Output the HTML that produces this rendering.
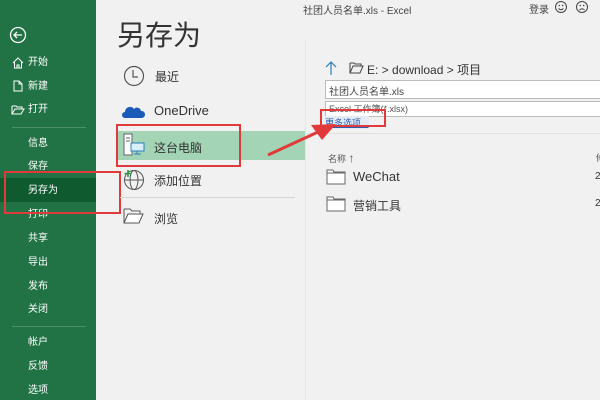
<!DOCTYPE html>
<html><head><meta charset="utf-8"><style>
*{margin:0;padding:0;box-sizing:border-box}
body{width:600px;height:400px;overflow:hidden;background:#f1f1f1;font-family:"Liberation Sans","Noto Sans CJK SC",sans-serif;position:relative;color:#333}
.a{position:absolute;white-space:nowrap}
#side{position:absolute;left:0;top:0;width:96px;height:400px;background:#217346}
.s{position:absolute;left:28px;font-size:10px;color:#fff;line-height:12px}
.hl{position:absolute;left:0;top:178px;width:96px;height:24px;background:#0f5a2e}
.ln{position:absolute;left:12px;width:74px;height:1px;background:#4d9068}
.box{position:absolute;border:1px solid #bbb;background:#fff}
.red{position:absolute;border:2px solid #e03a3a}
</style></head><body>
<div id="side">
<svg class="a" style="left:9px;top:26px" width="18" height="18"><circle cx="9" cy="9" r="7.5" fill="none" stroke="#fff" stroke-width="1.3"/><path d="M13 9H5M8 6L5 9l3 3" fill="none" stroke="#fff" stroke-width="1.3"/></svg>
<svg class="a" style="left:12px;top:57px" width="12" height="12"><path d="M1 6L6 1l5 5M2.5 5v6h7V5M5 11V8h2v3" fill="none" stroke="#fff" stroke-width="1"/></svg>
<div class="s" style="top:57px">开始</div>
<svg class="a" style="left:12px;top:80px" width="12" height="12"><path d="M2 1h5l3 3v7H2zM7 1v3h3" fill="none" stroke="#fff" stroke-width="1"/></svg>
<div class="s" style="top:81px">新建</div>
<svg class="a" style="left:11px;top:104px" width="14" height="12"><path d="M1 2h4l1 1h5v2M1 2v8h9l3-5H4L1 10" fill="none" stroke="#fff" stroke-width="1"/></svg>
<div class="s" style="top:104px">打开</div>
<div class="ln" style="top:127px"></div>
<div class="s" style="top:138px">信息</div>
<div class="s" style="top:161px">保存</div>
<div class="hl"></div>
<div class="s" style="top:185px">另存为</div>
<div class="s" style="top:209px">打印</div>
<div class="s" style="top:233px">共享</div>
<div class="s" style="top:257px">导出</div>
<div class="s" style="top:281px">发布</div>
<div class="s" style="top:304px">关闭</div>
<div class="ln" style="top:326px"></div>
<div class="s" style="top:337px">帐户</div>
<div class="s" style="top:361px">反馈</div>
<div class="s" style="top:385px">选项</div>
</div>
<div class="red" style="left:4px;top:171px;width:117px;height:43px"></div>

<div class="a" style="left:303px;top:2px;font-size:10px;color:#444">社团人员名单.xls - Excel</div>
<div class="a" style="left:529px;top:1px;font-size:10px;color:#444">登录</div>
<svg class="a" style="left:554px;top:0" width="40" height="14"><g fill="none" stroke="#444" stroke-width="1"><circle cx="7" cy="7" r="5.5"/><circle cx="28" cy="7" r="5.5"/><path d="M4.5 8.5q2.5 2.5 5 0M25.5 10q2.5-2.5 5 0"/></g><g fill="#444"><circle cx="5.3" cy="5.5" r=".8"/><circle cx="8.7" cy="5.5" r=".8"/><circle cx="26.3" cy="5.5" r=".8"/><circle cx="29.7" cy="5.5" r=".8"/></g></svg>

<div class="a" style="left:117px;top:19px;font-size:28px;color:#333;line-height:34px">另存为</div>
<svg class="a" style="left:123px;top:65px" width="22" height="22"><circle cx="11" cy="11" r="9.5" fill="none" stroke="#555" stroke-width="1.2"/><path d="M10 5v7h5" fill="none" stroke="#555" stroke-width="1.2"/></svg>
<div class="a" style="left:155px;top:68px;font-size:12px">最近</div>
<svg class="a" style="left:122px;top:103px" width="24" height="16"><path d="M3 15a3 3 0 010-6 5 5 0 019-3 4 4 0 017 2 3.5 3.5 0 011 7z" fill="#1b5bb8"/></svg>
<div class="a" style="left:154px;top:103px;font-size:13px">OneDrive</div>
<div class="a" style="left:118px;top:131px;width:187px;height:29px;background:#a3d4b5"></div>
<svg class="a" style="left:123px;top:133px" width="22" height="24"><path d="M1 1h8v21H1z" fill="#fff" stroke="#666"/><path d="M3 5h4M3 8h4" stroke="#666"/><rect x="8" y="10" width="13" height="8" fill="#d8eef8" stroke="#2a7fbf"/><path d="M14 18v3M11 21h7" stroke="#2a7fbf"/></svg>
<div class="a" style="left:154px;top:139px;font-size:12px">这台电脑</div>
<div class="red" style="left:116px;top:124px;width:125px;height:43px"></div>
<svg class="a" style="left:122px;top:168px" width="24" height="24"><circle cx="12" cy="12" r="9.5" fill="none" stroke="#555"/><ellipse cx="12" cy="12" rx="4" ry="9.5" fill="none" stroke="#555"/><path d="M2.5 12h19" stroke="#555"/><path d="M6 2v7M2.5 5.5h7" stroke="#2a9a4a" stroke-width="1.6"/></svg>
<div class="a" style="left:154px;top:172px;font-size:12px">添加位置</div>
<div class="a" style="left:120px;top:197px;width:175px;height:1px;background:#d6d6d6"></div>
<svg class="a" style="left:123px;top:207px" width="22" height="18"><path d="M1 2h6l2 2h8v3M1 2v14h15l4-9H5L1 16" fill="#fff" stroke="#555"/></svg>
<div class="a" style="left:154px;top:210px;font-size:12px">浏览</div>

<div class="a" style="left:305px;top:40px;width:1px;height:360px;background:#e6e6e6"></div>
<svg class="a" style="left:325px;top:60px" width="12" height="16"><path d="M6 15V2M1 7l5-5 5 5" fill="none" stroke="#2a7fbf" stroke-width="1.2"/></svg>
<svg class="a" style="left:349px;top:62px" width="15" height="12"><path d="M1 1h4l1 1h6v2M1 1v10h10l3-7H4L1 11" fill="none" stroke="#444"/></svg>
<div class="a" style="left:367px;top:61px;font-size:12px;color:#333">E: &gt; download &gt; 项目</div>
<div class="box" style="left:325px;top:80px;width:280px;height:19px"></div>
<div class="a" style="left:329px;top:83px;font-size:10px;color:#444">社团人员名单.xls</div>
<div class="box" style="left:325px;top:101px;width:280px;height:16px"></div>
<div class="a" style="left:329px;top:102px;font-size:9px;color:#555">Excel 工作簿(*.xlsx)</div>
<div class="a" style="left:325px;top:116px;font-size:9px;color:#2a5db0;text-decoration:underline;background:#e4ebf5">更多选项...</div>
<div class="red" style="left:320px;top:109px;width:66px;height:18px"></div>
<div class="a" style="left:306px;top:133px;width:294px;height:1px;background:#e0e0e0"></div>
<div class="a" style="left:328px;top:151px;font-size:9px;color:#555">名称 <span style="font-size:12px">↑</span></div>
<div class="a" style="left:596px;top:151px;font-size:9px;color:#555">修</div>
<svg class="a" style="left:326px;top:169px" width="20" height="16"><path d="M1 1h6l1 2h11v12H1z" fill="#fff" stroke="#666"/><path d="M1 4h18" stroke="#666"/></svg>
<div class="a" style="left:353px;top:169px;font-size:13px">WeChat</div>
<div class="a" style="left:595px;top:171px;font-size:10px">2</div>
<svg class="a" style="left:326px;top:196px" width="20" height="16"><path d="M1 1h6l1 2h11v12H1z" fill="#fff" stroke="#666"/><path d="M1 4h18" stroke="#666"/></svg>
<div class="a" style="left:353px;top:197px;font-size:12px">营销工具</div>
<div class="a" style="left:595px;top:198px;font-size:10px">2</div>

<svg class="a" style="left:0;top:0" width="600" height="400"><path d="M268 155L318 132" stroke="#e03a3a" stroke-width="3"/><path d="M336 124L311 125L322 140z" fill="#e03a3a"/></svg>
</body></html>
